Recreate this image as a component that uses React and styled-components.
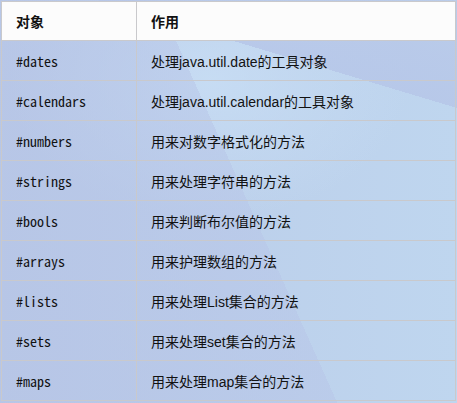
import React from 'react';
import styled, { createGlobalStyle } from 'styled-components';

const rows = [
    ['#dates', '处理java.util.date的工具对象'],
    ['#calendars', '处理java.util.calendar的工具对象'],
    ['#numbers', '用来对数字格式化的方法'],
    ['#strings', '用来处理字符串的方法'],
    ['#bools', '用来判断布尔值的方法'],
    ['#arrays', '用来护理数组的方法'],
    ['#lists', '用来处理List集合的方法'],
    ['#sets', '用来处理set集合的方法'],
    ['#maps', '用来处理map集合的方法'],
];

const GlobalStyle = createGlobalStyle`
    html, body {
        margin: 0;
        padding: 0;
    }
    body {
        width: 457px;
        height: 403px;
        overflow: hidden;
        background-color: #bacde9;
        background-image:
            linear-gradient(16.7deg, transparent 0%, transparent 80%, rgba(182, 198, 232, 0.85) 80%, rgba(184, 200, 232, 0.7) 100%),
            linear-gradient(246deg, transparent 0%, transparent 47%, rgba(184, 198, 232, 0.55) 47%, rgba(182, 196, 230, 0.7) 100%),
            radial-gradient(ellipse 200px 140px at 210px 80px, rgba(202, 224, 246, 0.75), transparent),
            linear-gradient(90deg, #b9cae7 0%, #bcd0eb 50%, #bfd6ef 100%);
        font-family: "Noto Sans CJK SC", "Liberation Sans", sans-serif;
        color: #1a1a1a;
    }
`;

const Page = styled.div`
    padding: 1px;
`;

const Table = styled.table`
    width: 455px;
    border-collapse: collapse;
    border: 1px solid #c9c9cc;
    table-layout: fixed;
`;

const HeadCell = styled.th`
    height: 39px;
    padding: 0 0 0 14px;
    background: #fcfcfc;
    border: 1px solid #c9c9cc;
    text-align: left;
    font-family: "Liberation Sans", "Noto Sans CJK SC", sans-serif;
    font-size: 14px;
    font-weight: bold;
    color: #111;
    width: ${props => props.width || 'auto'};
    box-sizing: border-box;
`;

const Cell = styled.td`
    height: 39px;
    padding: 0 0 0 14px;
    border: 1px solid #c9c9cc;
    font-family: ${props => props.mono
        ? '"Noto Sans Mono CJK SC", "DejaVu Sans Mono", monospace'
        : '"Liberation Sans", "Noto Sans CJK SC", sans-serif'};
    font-size: 14px;
    color: #121212;
    white-space: nowrap;
`;

const App = () => {
    return (<Page>
        <GlobalStyle />
        <Table>
            <thead>
                <tr>
                    <HeadCell width="135px">对象</HeadCell>
                    <HeadCell>作用</HeadCell>
                </tr>
            </thead>
            <tbody>
                {
                    rows.map(([name, desc]) => {
                        return <tr key={name}>
                            <Cell mono>{name}</Cell>
                            <Cell>{desc}</Cell>
                        </tr>
                    })
                }
            </tbody>
        </Table>
    </Page>);
}

export default App;
